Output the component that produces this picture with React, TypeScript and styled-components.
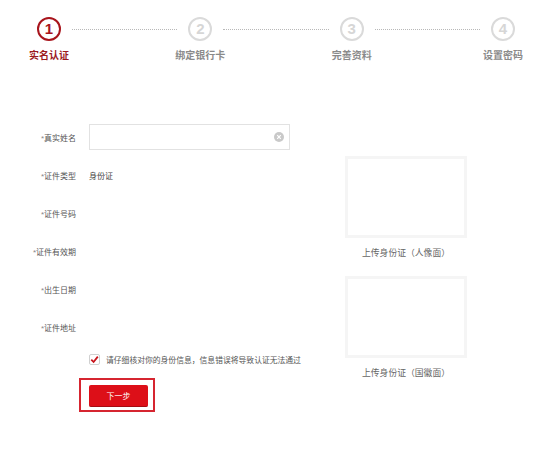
import React from "react";
import styled, { createGlobalStyle } from "styled-components";

const Global = createGlobalStyle`
  html, body { margin: 0; padding: 0; background: #fff; }
  body { font-family: "Noto Sans CJK SC", "Noto Sans", sans-serif; }
`;

const Page = styled.div`
  width: 551px;
  height: 449px;
  background: #fff;
  overflow: hidden;
`;

const Steps = styled.div`
  display: grid;
  grid-template-columns: 80px 1fr 80px 1fr 80px 1fr 80px;
  padding: 17px 8px 0 9px;
`;

const Step = styled.div`
  display: flex;
  flex-direction: column;
  align-items: center;
`;

const Circle = styled.div<{ $active?: boolean }>`
  width: 24px;
  height: 24px;
  box-sizing: border-box;
  border-radius: 50%;
  border: 2px solid ${(p) => (p.$active ? "#a8141c" : "#dadada")};
  color: ${(p) => (p.$active ? "#a8141c" : "#d6d6d6")};
  font-family: "Liberation Sans", Arial, sans-serif;
  font-weight: 700;
  font-size: 15px;
  line-height: 20px;
  text-align: center;
`;

const StepLabel = styled.div<{ $active?: boolean }>`
  margin-top: 6px;
  font-size: 10px;
  line-height: 16px;
  font-weight: 700;
  color: ${(p) => (p.$active ? "#9c1a1e" : "#8a8a8a")};
  white-space: nowrap;
`;

const Line = styled.div`
  margin: 11.5px -17px 0;
  height: 0;
  border-top: 1px dotted #b8b8b8;
`;

const Body = styled.div`
  display: flex;
  padding-top: 55px;
`;

const Form = styled.div`
  width: 345px;
  display: grid;
  grid-template-columns: 76px 1fr;
  grid-template-rows: repeat(6, 38px) 26px auto;
  column-gap: 13px;
  align-items: center;
`;

const Label = styled.div`
  text-align: right;
  font-size: 8px;
  color: #555;
  white-space: nowrap;
`;

const Star = styled.span`
  color: #888;
  font-family: "Liberation Sans", Arial, sans-serif;
`;

const Value = styled.div`
  font-size: 8px;
  color: #444;
`;

const InputBox = styled.div`
  width: 201px;
  height: 26px;
  box-sizing: border-box;
  border: 1px solid #e2e2e2;
  display: flex;
  align-items: center;
  justify-content: flex-end;
  padding-right: 5px;
`;

const ClearIcon = styled.svg`
  width: 10px;
  height: 10px;
`;

const CheckRow = styled.div`
  grid-column: 2;
  display: flex;
  align-items: center;
  gap: 6px;
  height: 26px;
  font-size: 7.8px;
  color: #555;
  white-space: nowrap;
`;

const CheckBox = styled.svg`
  width: 11px;
  height: 11px;
  flex: none;
`;

const ButtonFrame = styled.div`
  grid-column: 2;
  align-self: start;
  justify-self: start;
  margin-left: -10px;
  margin-top: 6px;
  border: 2px solid #d62530;
  padding: 5px 5px 3px 8px;
  display: flex;
`;

const NextButton = styled.button`
  width: 59px;
  height: 22px;
  border: none;
  border-bottom: 1px solid #a50c12;
  border-radius: 2px;
  background: #dd0f18;
  color: #fff;
  font-family: "Noto Sans CJK SC", sans-serif;
  font-size: 8px;
  padding: 0;
  cursor: pointer;
`;

const Uploads = styled.div`
  display: flex;
  flex-direction: column;
  align-items: center;
  width: 122px;
  padding-top: 38px;
`;

const PhotoBox = styled.div<{ $gap: number }>`
  margin-top: ${(p) => p.$gap}px;
  width: 122px;
  height: 82px;
  box-sizing: border-box;
  border: 3px solid #f5f5f5;
  background: #fff;
`;

const Caption = styled.div`
  margin-top: 7px;
  font-size: 8.8px;
  line-height: 16px;
  color: #666;
  white-space: nowrap;
`;

const steps = ["实名认证", "绑定银行卡", "完善资料", "设置密码"];

const rows: { label: string; field?: React.ReactNode }[] = [
  {
    label: "真实姓名",
    field: (
      <InputBox>
        <ClearIcon viewBox="0 0 10 10">
          <circle cx="5" cy="5" r="5" fill="#c9c9c9" />
          <path d="M3.2 3.2 L6.8 6.8 M6.8 3.2 L3.2 6.8" stroke="#fff" strokeWidth="1.2" />
        </ClearIcon>
      </InputBox>
    ),
  },
  { label: "证件类型", field: <Value>身份证</Value> },
  { label: "证件号码" },
  { label: "证件有效期" },
  { label: "出生日期" },
  { label: "证件地址" },
];

export default function App() {
  return (
    <Page>
      <Global />
      <Steps>
        {steps.map((s, i) => (
          <React.Fragment key={s}>
            {i > 0 && <Line />}
            <Step>
              <Circle $active={i === 0}>{i + 1}</Circle>
              <StepLabel $active={i === 0}>{s}</StepLabel>
            </Step>
          </React.Fragment>
        ))}
      </Steps>
      <Body>
        <Form>
          {rows.map((r) => (
            <React.Fragment key={r.label}>
              <Label>
                <Star>*</Star>
                {r.label}
              </Label>
              <div>{r.field}</div>
            </React.Fragment>
          ))}
          <CheckRow>
            <CheckBox viewBox="0 0 11 11">
              <rect x="0.5" y="0.5" width="10" height="10" rx="1.5" fill="#fff" stroke="#d0d0d0" />
              <path d="M2.3 5.6 L4.6 8 L8.8 2.6" fill="none" stroke="#c8141c" strokeWidth="1.8" />
            </CheckBox>
            请仔细核对你的身份信息，信息错误将导致认证无法通过
          </CheckRow>
          <ButtonFrame>
            <NextButton>下一步</NextButton>
          </ButtonFrame>
        </Form>
        <Uploads>
          <PhotoBox $gap={0} />
          <Caption>上传身份证（人像面）</Caption>
          <PhotoBox $gap={15} />
          <Caption>上传身份证（国徽面）</Caption>
        </Uploads>
      </Body>
    </Page>
  );
}
